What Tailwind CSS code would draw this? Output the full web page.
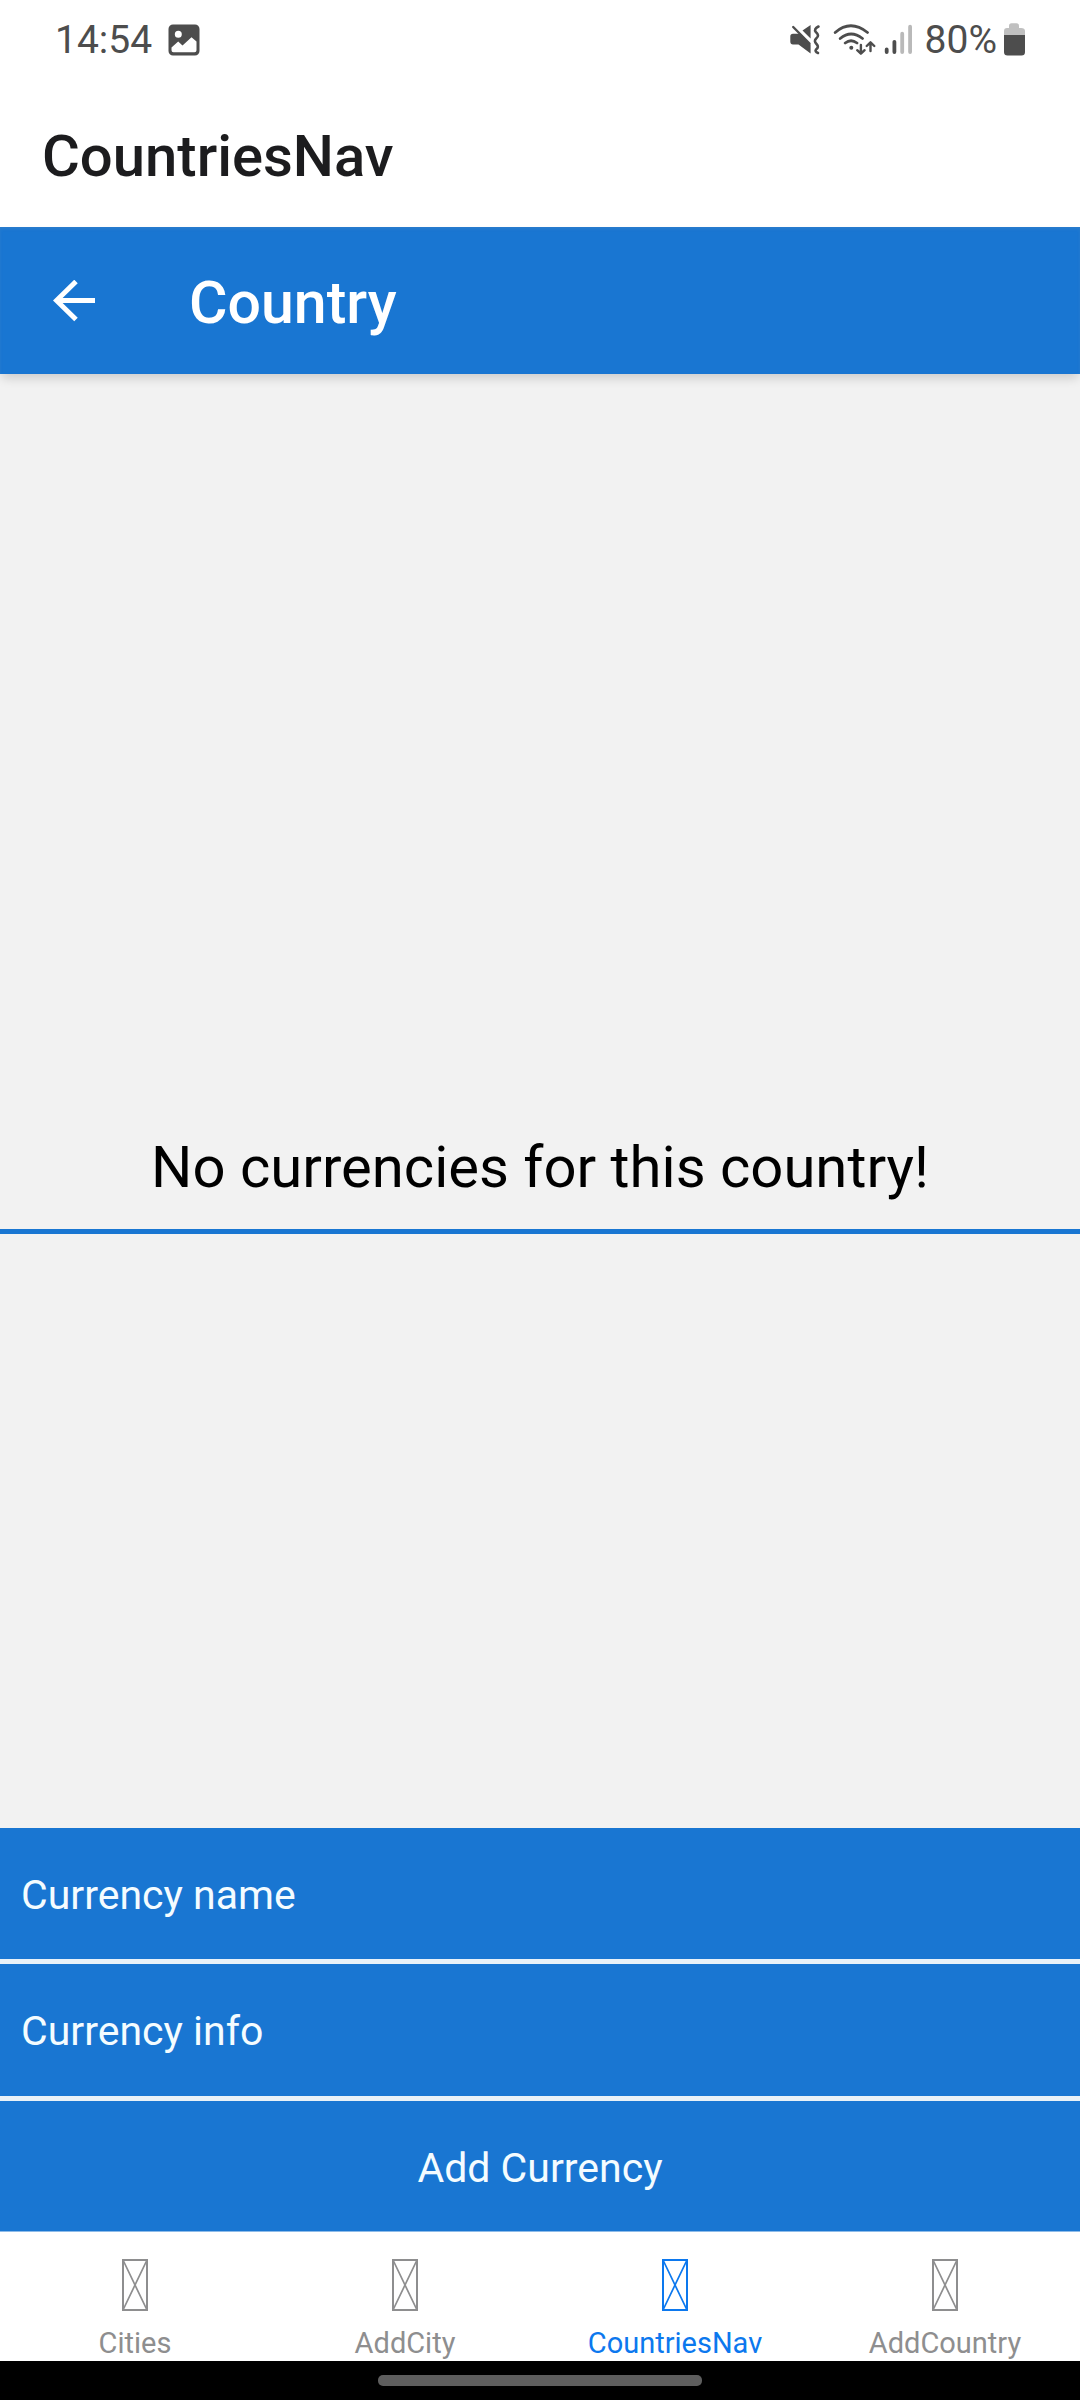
<!DOCTYPE html>
<html lang="en">
<head>
<meta charset="utf-8">
<meta name="viewport" content="width=device-width, initial-scale=1">
<title>CountriesNav</title>
<script src="https://cdn.jsdelivr.net/npm/@tailwindcss/browser@4"></script>
</head>
<body class="flex min-h-screen flex-col bg-[#f2f2f2] font-[Roboto,sans-serif]">

  <!-- Status bar -->
  <div class="flex h-20 items-center justify-between bg-white pr-[53px] pl-[55px] text-[39px] leading-10 text-[#4d4d4d]">
    <div class="flex items-center gap-4">
      <span>14:54</span>
      <svg class="size-8" viewBox="0 0 32 32" aria-hidden="true">
        <path fill="currentColor" fill-rule="evenodd" d="M5 .5h22a4.500 4.500 0 0 1 4.500 4.500v22a4.500 4.500 0 0 1-4.500 4.500H5A4.500 4.500 0 0 1 .5 27V5A4.500 4.500 0 0 1 5 .5ZM10.300 6.700a3.500 3.500 0 1 0 0 7a3.500 3.500 0 1 0 0-7ZM3.500 23.500V26.300Q3.500 28.300 5.500 28.300H26.500Q28.500 28.300 28.500 26.300V17.500L23.500 13.200L14.500 21.400L10.200 17.600Z"/>
      </svg>
    </div>
    <div class="flex items-center">
      <svg class="h-10 w-[134px]" viewBox="0 0 134 40" fill="none" stroke="currentColor" stroke-linecap="round" stroke-linejoin="round" aria-hidden="true">
        <!-- Muted speaker with vibration -->
        <path fill="currentColor" stroke="none" d="M11 13.700H4Q1.300 13.700 1.300 16.500V21.500Q1.300 24.500 4 24.500H9.500L21.600 33.500V24.400ZM21.600 5V18.600L13.500 10.500Z"/>
        <path stroke-width="2.400" d="M4.200 7L20.500 23.500"/>
        <path stroke-width="2.600" d="M29.500 6.500Q24.500 9 26.800 12Q31 15.500 27.200 18.500Q24.500 21 27.500 24Q30.500 27 27 29.500Q25.500 31.500 29 33"/>
        <!-- Wi-Fi with transfer arrows -->
        <path stroke-width="2.800" d="M46.200 12.500Q61.500-1 78.500 12.500M51.200 18.500Q62 9.500 73.500 18.500M56.200 23Q62 18.500 68 23"/>
        <circle cx="62.300" cy="27.800" r="2" fill="currentColor" stroke="none"/>
        <path stroke-width="2.400" d="M71.900 25V33.500M68.200 30.200L71.900 33.700L75.600 30.200M81.500 31V22.500M77.700 26L81.500 22.300L85.300 26"/>
        <!-- Mobile signal -->
        <path stroke-width="3.800" d="M97.700 29.500V32.100M105.400 21.800V32.100"/>
        <path stroke="#b9b9b9" stroke-width="3.800" d="M113.200 13.700V32.100M121.100 6.700V32.100"/>
      </svg>
      <span class="ml-0.5">80%</span>
      <svg class="ml-1 h-10 w-[26px]" viewBox="0 0 26 40" aria-hidden="true">
        <path fill="#c0c0c0" d="M3 16V11Q3 8 6 8H8V6Q8 3.200 10.500 3.200H15.500Q18 3.200 18 6V8H20Q24 8 24 11V16Z"/>
        <path fill="currentColor" d="M3 15H24V32Q24 35.500 20.500 35.500H6.500Q3 35.500 3 32Z"/>
      </svg>
    </div>
  </div>

  <header class="flex h-[147px] items-center bg-white px-[42px] pt-1">
    <h1 class="text-[58px] leading-[68px] font-medium text-[#1c1c1e]">CountriesNav</h1>
  </header>

  <!-- Screen header -->
  <header class="flex h-[147px] items-center bg-[#1976d2] text-white shadow-[inset_0_2px_3px_#2b7dcc,0_6px_10px_-2px_rgba(0,0,0,0.16)]">
    <button type="button" aria-label="Back" class="ml-10 flex size-[67px] items-center justify-center">
      <svg class="size-[42px]" viewBox="0 0 42 42" fill="none" stroke="currentColor" stroke-width="5" aria-hidden="true">
        <path d="M42 20.500H4M23 1.500L3.500 20.500L23 39.500"/>
      </svg>
    </button>
    <h2 class="ml-[82px] pt-1 text-[59px] leading-[68px] font-medium">Country</h2>
  </header>

  <main class="flex grow flex-col">
    <div class="flex grow flex-col items-stretch justify-center">
      <p class="mt-[165px] border-b-[5px] border-[#1976d2] pb-7 text-center text-[58px] leading-[68px] text-black">No currencies for this country!</p>
    </div>
    <form class="flex flex-col gap-[5px] bg-[#e8f1f8] text-[41px] leading-12 text-white">
      <input type="text" aria-label="Currency name" placeholder="Currency name" class="h-[131px] w-full bg-[#1976d2] px-[21px] pt-0.5 outline-none placeholder:text-[#f4fcff]">
      <input type="text" aria-label="Currency info" placeholder="Currency info" class="h-[132px] w-full bg-[#1976d2] px-[21px] pt-0.5 outline-none placeholder:text-[#f4fcff]">
      <button type="button" class="h-[130px] w-full bg-[#1976d2] pt-1 text-[#f4fcff]">Add Currency</button>
    </form>
  </main>

  <!-- Bottom tabs -->
  <nav class="grid h-[130px] grid-cols-4 border-t border-[#8dbbe8] bg-white text-[29px] leading-9 text-[#8e8e8f]">
    <a href="#cities" class="flex flex-col items-center pt-[27px]">
      <svg class="h-[52px] w-[26px]" viewBox="0 0 26 52" fill="none" stroke="currentColor" aria-hidden="true"><path stroke-width="2" d="M1 1H25V51H1Z"/><path stroke-width="1.700" d="M1 1L25 51M25 1L1 51"/></svg>
      <span class="mt-3.5">Cities</span>
    </a>
    <a href="#add-city" class="flex flex-col items-center pt-[27px]">
      <svg class="h-[52px] w-[26px]" viewBox="0 0 26 52" fill="none" stroke="currentColor" aria-hidden="true"><path stroke-width="2" d="M1 1H25V51H1Z"/><path stroke-width="1.700" d="M1 1L25 51M25 1L1 51"/></svg>
      <span class="mt-3.5">AddCity</span>
    </a>
    <a href="#countries" aria-current="page" class="flex flex-col items-center pt-[27px] text-[#0c78ee]">
      <svg class="h-[52px] w-[26px]" viewBox="0 0 26 52" fill="none" stroke="currentColor" aria-hidden="true"><path stroke-width="2" d="M1 1H25V51H1Z"/><path stroke-width="1.700" d="M1 1L25 51M25 1L1 51"/></svg>
      <span class="mt-3.5">CountriesNav</span>
    </a>
    <a href="#add-country" class="flex flex-col items-center pt-[27px]">
      <svg class="h-[52px] w-[26px]" viewBox="0 0 26 52" fill="none" stroke="currentColor" aria-hidden="true"><path stroke-width="2" d="M1 1H25V51H1Z"/><path stroke-width="1.700" d="M1 1L25 51M25 1L1 51"/></svg>
      <span class="mt-3.5">AddCountry</span>
    </a>
  </nav>

  <!-- System gesture bar -->
  <div class="flex h-[39px] justify-center bg-black pt-[14px]">
    <div class="h-[11px] w-[30%] rounded-[5px] bg-[#5e5e5e]"></div>
  </div>
</body>
</html>
